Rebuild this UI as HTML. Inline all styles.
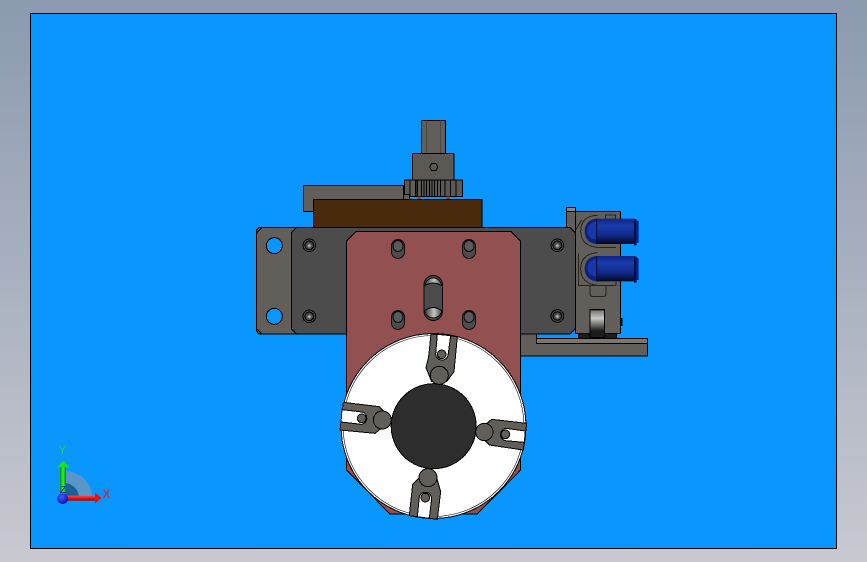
<!DOCTYPE html>
<html><head><meta charset="utf-8"><style>
html,body{margin:0;padding:0;width:867px;height:562px;overflow:hidden;background:linear-gradient(#8b9aaf,#c8c9d1)}
svg{position:absolute;left:0;top:0}
</style></head><body>
<svg width="867" height="562" viewBox="0 0 867 562" xmlns="http://www.w3.org/2000/svg">
<defs>
<linearGradient id="cyl" x1="0" y1="0" x2="0" y2="1">
<stop offset="0" stop-color="#0e2488"/><stop offset=".28" stop-color="#1a3cac"/><stop offset=".65" stop-color="#102a8c"/><stop offset="1" stop-color="#020820"/></linearGradient>
<radialGradient id="cone" cx=".5" cy=".55" r=".55"><stop offset="0" stop-color="#d8d8d8"/><stop offset=".45" stop-color="#555"/><stop offset="1" stop-color="#2a2a2a"/></radialGradient>
<linearGradient id="cone2" x1="0" y1="0" x2="1" y2="0"><stop offset="0" stop-color="#333"/><stop offset=".55" stop-color="#c4c4c4"/><stop offset="1" stop-color="#444"/></linearGradient>
<linearGradient id="roll" x1="0" y1="0" x2="0" y2="1"><stop offset="0" stop-color="#777"/><stop offset=".4" stop-color="#c8c8c4"/><stop offset="1" stop-color="#222"/></linearGradient>
<linearGradient id="gshaft" x1="0" y1="0" x2="1" y2="0"><stop offset="0" stop-color="#0a8a10"/><stop offset=".5" stop-color="#20ff30"/><stop offset="1" stop-color="#058010"/></linearGradient>
<linearGradient id="rshaft" x1="0" y1="0" x2="0" y2="1"><stop offset="0" stop-color="#ff5050"/><stop offset=".5" stop-color="#f01010"/><stop offset="1" stop-color="#800808"/></linearGradient>
<radialGradient id="ball" cx=".4" cy=".35" r=".7"><stop offset="0" stop-color="#4060ff"/><stop offset="1" stop-color="#0808b0"/></radialGradient>
</defs>
<rect x="30.5" y="13.5" width="806" height="535" fill="#0a96ff" stroke="#000" stroke-width="1"/>

<!-- top stack + plates -->
<g transform="translate(250,110) scale(.33333)" stroke="#000" stroke-width="3" shape-rendering="crispEdges">
<rect x="515" y="31" width="72" height="100" fill="#625f5a"/>
<path d="M530 31v100M572 31v100" stroke="#4a4844" fill="none"/>
<rect x="487" y="130" width="125" height="82" fill="#5c5955"/>
<path d="M160 226H478V268H190V304H160Z" fill="#625f5a"/>
<path d="M460 226V268" fill="none"/>
<rect x="190" y="268" width="506" height="85" fill="#4a2a0c"/>
<path d="M27 352H960V672H27L20 664V360Z" fill="#4c4c4c"/>
<path d="M27 352H140L124 368V656L140 672H27L20 664V360Z" fill="#625f5a"/>
<path d="M20 368L36 352M20 656L36 672" fill="none"/>
<circle cx="73" cy="407" r="24" fill="#0a96ff"/>
<circle cx="73" cy="619" r="24" fill="#0a96ff"/>
<g fill="none"><circle cx="178" cy="406" r="19"/><circle cx="178" cy="619" r="19"/></g>
<circle cx="178" cy="406" r="13" fill="url(#cone)"/>
<circle cx="178" cy="619" r="13" fill="url(#cone)"/>
</g>
<polygon points="431.500,163.500 436,163.500 437.800,167 436,170.500 431.500,170.500 429.700,167" fill="none" stroke="#000" stroke-width=".9"/>

<!-- gear -->
<g transform="translate(400,175) scale(.33333)" shape-rendering="crispEdges">
<rect x="14" y="15" width="174" height="44" fill="#5c5955" stroke="#000" stroke-width="3"/>
<rect x="30" y="15" width="158" height="50" fill="#5c5955" stroke="#000" stroke-width="3"/>
<path d="M48 15v50M52 15v50M64 15v50M72 15v50M80 15v50M88 15v50M96 15v50M104 15v50M112 15v50M122 15v50M135 15v50M152 15v50M168 15v50" stroke="#000" stroke-width="3" fill="none"/>
<rect x="30" y="15" width="16" height="50" fill="#625f5a" stroke="#000" stroke-width="3"/>
<rect x="52" y="65" width="9" height="7" fill="#8a3c30"/><rect x="140" y="65" width="9" height="7" fill="#8a3c30"/>
</g>

<!-- right side -->
<g transform="translate(440,170) scale(.33333)" stroke="#000" stroke-width="3" shape-rendering="crispEdges">
<path d="M242 492H290V505H622V558H242Z" fill="#625f5a"/>
<rect x="290" y="505" width="332" height="16" fill="#7a7771"/>
<rect x="415" y="488" width="114" height="17" fill="#1c1c1c"/>
<rect x="379" y="112" width="28" height="120" fill="#625f5a"/>
<rect x="379" y="112" width="28" height="12" fill="#8a8780"/>
<path d="M180 172H390L406 188V476L390 492H180" fill="#4c4c4c"/>
<rect x="407" y="124" width="135" height="366" fill="#625f5a"/>
<g fill="none" stroke="#26241f">
<path d="M472 136Q422 138 422 185Q424 228 472 232H528"/>
<path d="M472 248Q422 252 422 297Q422 340 472 346H528V336M415 250V346H470M407 180L425 150"/>
<path d="M497 135H527V147H497Z"/>
<path d="M450 346V370Q450 380 460 380H488Q498 380 498 370V346"/>
</g>
<rect x="450" y="418" width="44" height="85" fill="#1c1c1c"/>
<rect x="452" y="421" width="40" height="60" fill="url(#roll)" stroke="none"/>
<rect x="542" y="445" width="4" height="22" fill="#222"/>
<g fill="none"><circle cx="352" cy="226" r="19"/><circle cx="352" cy="438" r="19"/></g>
<circle cx="352" cy="226" r="13" fill="url(#cone)"/>
<circle cx="352" cy="438" r="13" fill="url(#cone)"/>
</g>
<g transform="translate(440,170) scale(.33333)">
<path d="M472 146C448 146 434 163 434 184C434 205 448 222 472 222Z" fill="#0c2080"/>
<path d="M472 154C454 154 442 168 442 184C442 198 454 208 472 208Z" fill="#1838aa"/>
<rect x="470" y="146" width="116" height="76" fill="url(#cyl)"/>
<path d="M470 146V222" stroke="#020a30" stroke-width="3"/>
<rect x="582" y="148" width="8" height="78" fill="#060f50"/>
<rect x="590" y="152" width="6" height="66" fill="#0a2490"/>
<path d="M472 258C448 258 434 275 434 296C434 317 448 334 472 334Z" fill="#0c2080"/>
<path d="M472 266C454 266 442 280 442 296C442 310 454 320 472 320Z" fill="#1838aa"/>
<rect x="470" y="258" width="116" height="76" fill="url(#cyl)"/>
<path d="M470 258V334" stroke="#020a30" stroke-width="3"/>
<rect x="582" y="260" width="8" height="78" fill="#060f50"/>
<rect x="590" y="264" width="6" height="66" fill="#0a2490"/>
</g>

<!-- red plate with slots -->
<path d="M356 231.500H511L520.700 241V470L477 514H390L346.700 470V241Z" fill="#925050" stroke="#000" shape-rendering="crispEdges"/>
<g stroke="#000" fill="#4c4c4c" stroke-width=".9">
<rect x="391.500" y="239.500" width="13" height="19" rx="6.500"/>
<rect x="391.500" y="310.500" width="13" height="19" rx="6.500"/>
<rect x="462.500" y="239.500" width="13" height="19" rx="6.500"/>
<rect x="462.500" y="310.500" width="13" height="19" rx="6.500"/>
<ellipse cx="398" cy="246" rx="5" ry="5.500" fill="#5a5a5a"/><ellipse cx="398" cy="317" rx="5" ry="5.500" fill="#5a5a5a"/>
<ellipse cx="469" cy="246" rx="5" ry="5.500" fill="#5a5a5a"/><ellipse cx="469" cy="317" rx="5" ry="5.500" fill="#5a5a5a"/>
<rect x="424" y="275.500" width="18.500" height="45" rx="9.250"/>
</g>
<path d="M424.500 286A9 10.500 0 0 1 442 286Q433 280 424.500 286Z" fill="url(#cone2)" stroke="#000" stroke-width=".9"/>
<path d="M424.500 311Q433 304 442 311A9 9 0 0 1 424.500 311Z" fill="url(#cone2)" stroke="#000" stroke-width=".9"/>

<!-- chuck -->
<circle cx="433.500" cy="426" r="92.500" fill="#fff" stroke="#000" shape-rendering="crispEdges"/>
<circle cx="433.500" cy="426" r="90.500" fill="none" stroke="#000" stroke-width=".6"/>
<circle cx="433.700" cy="426.200" r="42.500" fill="#2d2d2d" stroke="#000" shape-rendering="crispEdges"/>
<g transform="translate(330,325) scale(.33333)" stroke="#000" stroke-width="3" shape-rendering="crispEdges">
<!-- top -->
<polygon points="303,27 382,35 372,140 350,170 305,170 288,128 296,95" fill="#625f5a"/>
<path d="M322 28L362 32L354 92A19 19 0 0 1 317 88Z" fill="#fff"/>
<circle cx="335" cy="88" r="13" fill="#625f5a"/>
<circle cx="328" cy="151" r="27" fill="#625f5a"/>
<!-- right -->
<polygon points="590,295 485,283 440,320 478,360 580,375" fill="#625f5a"/>
<path d="M586 318L583 352L525 347A19 19 0 0 1 528 310Z" fill="#fff"/>
<circle cx="526" cy="328" r="13" fill="#625f5a"/>
<circle cx="463" cy="321" r="26" fill="#625f5a"/>
<!-- bottom -->
<polygon points="238,572 248,478 268,458 320,458 332,500 322,583" fill="#625f5a"/>
<path d="M262 575L268 515A19 19 0 0 1 305 520L298 580Z" fill="#fff"/>
<circle cx="286" cy="518" r="13" fill="#625f5a"/>
<circle cx="294" cy="458" r="27" fill="#625f5a"/>
<!-- left -->
<polygon points="40,232 148,245 185,285 135,325 30,315" fill="#625f5a"/>
<path d="M36 254L97 261A19 19 0 0 1 94 298L33 291Z" fill="#fff"/>
<circle cx="95" cy="280" r="13" fill="#625f5a"/>
<circle cx="157" cy="285" r="27" fill="#625f5a"/>
</g>

<!-- triad -->
<g transform="translate(40,430) scale(.33333)">
<path d="M68 200V122A88 78 0 0 1 156 200Z" fill="#5a96c8"/>
<path d="M68 200V158A48 42 0 0 1 116 200Z" fill="#1a6098"/>
<rect x="60" y="110" width="18" height="88" fill="url(#gshaft)"/>
<polygon points="52,112 88,112 70,92" fill="#18e028"/>
<rect x="80" y="197" width="86" height="15" fill="url(#rshaft)"/>
<polygon points="165,188 185,204 165,220" fill="#e81010"/>
<circle cx="68" cy="206" r="16" fill="url(#ball)"/>
</g>
<text x="62.500" y="454" font-family="Liberation Sans,sans-serif" font-size="12" fill="#20d040" text-anchor="middle">Y</text>
<text x="106.500" y="498" font-family="Liberation Sans,sans-serif" font-size="12" fill="#f01010" text-anchor="middle">X</text>
<text x="63" y="493" font-family="Liberation Sans,sans-serif" font-size="10" fill="#1010c0" text-anchor="middle">Z</text>
</svg>
</body></html>
